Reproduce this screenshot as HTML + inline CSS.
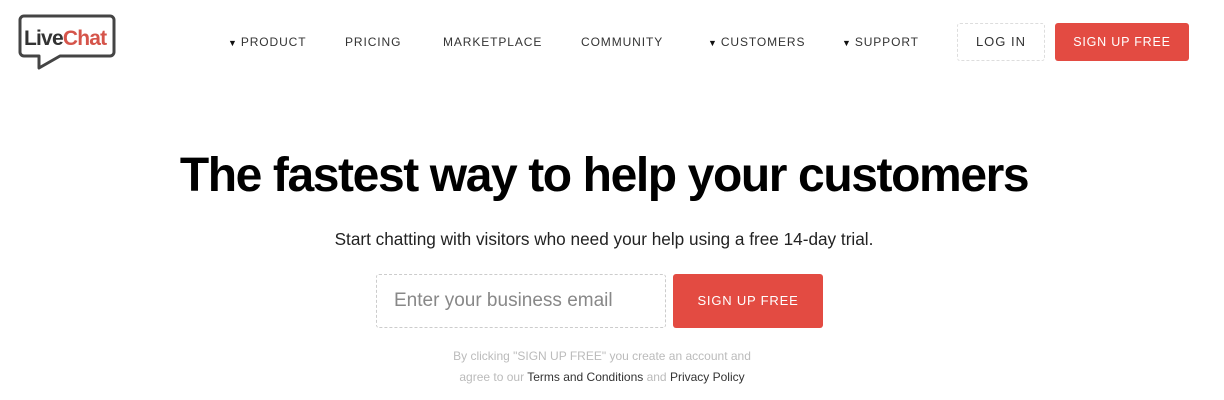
<!DOCTYPE html>
<html><head><meta charset="utf-8"><style>
*{margin:0;padding:0;box-sizing:border-box}
body{width:1224px;height:400px;background:#fff;font-family:"Liberation Sans",sans-serif;position:relative;overflow:hidden;color:#111}
.a{position:absolute;white-space:nowrap}
.nav{top:35px;font-size:12px;letter-spacing:0.9px;color:#333}
.tri{font-size:9px;margin-right:3px;color:#111}
</style></head><body>
<svg class="a" style="left:18px;top:14px" width="100" height="58" viewBox="0 0 100 58">
<path d="M6 2 H92 a4 4 0 0 1 4 4 V38 a4 4 0 0 1 -4 4 H42 L21 54 V42 H6 a4 4 0 0 1 -4 -4 V6 a4 4 0 0 1 4 -4 Z" fill="#fff" stroke="#444" stroke-width="3" stroke-linejoin="round"/>
<text x="6" y="31" font-family="Liberation Sans,sans-serif" font-size="21" font-weight="bold" letter-spacing="-0.8"><tspan fill="#333">Live</tspan><tspan fill="#d5544a">Chat</tspan></text>
</svg>
<div class="a nav" style="left:228px"><span class="tri">▼</span>PRODUCT</div>
<div class="a nav" style="left:345px">PRICING</div>
<div class="a nav" style="left:443px">MARKETPLACE</div>
<div class="a nav" style="left:581px">COMMUNITY</div>
<div class="a nav" style="left:708px"><span class="tri">▼</span>CUSTOMERS</div>
<div class="a nav" style="left:842px"><span class="tri">▼</span>SUPPORT</div>
<div class="a" style="left:957px;top:23px;width:88px;height:38px;border:1px dashed #ddd;border-radius:3px;font-size:13px;letter-spacing:1px;color:#333;text-align:center;line-height:36px">LOG IN</div>
<div class="a" style="left:1055px;top:23px;width:134px;height:38px;background:#e34b42;border-radius:3px;font-size:12.5px;letter-spacing:0.8px;color:#fff;text-align:center;line-height:38px">SIGN UP FREE</div>
<div class="a" style="left:0;width:1208px;top:148px;text-align:center;font-size:48px;font-weight:bold;letter-spacing:-1.4px;color:#000">The fastest way to help your customers</div>
<div class="a" style="left:0;width:1208px;top:229px;text-align:center;font-size:17.2px;color:#222">Start chatting with visitors who need your help using a free 14-day trial.</div>
<div class="a" style="left:376px;top:274px;width:290px;height:54px;border:1px dashed #ccc;border-radius:3px;font-size:19px;color:#888;padding-left:17px;line-height:52px">Enter your business email</div>
<div class="a" style="left:673px;top:274px;width:150px;height:54px;background:#e34b42;border-radius:3px;font-size:13px;letter-spacing:0.8px;color:#fff;text-align:center;line-height:54px">SIGN UP FREE</div>
<div class="a" style="left:0;width:1204px;top:346px;text-align:center;font-size:12px;color:#bbb;line-height:21px">By clicking "SIGN UP FREE" you create an account and<br>agree to our <span style="color:#333">Terms and Conditions</span> and <span style="color:#333">Privacy Policy</span></div>
</body></html>
